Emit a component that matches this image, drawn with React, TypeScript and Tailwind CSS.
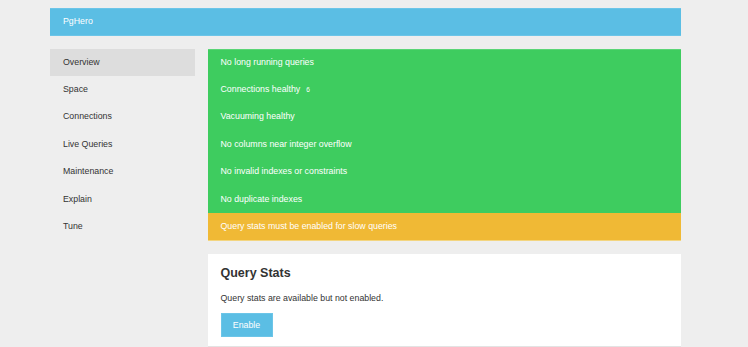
import React from "react";

const nav = ["Overview", "Space", "Connections", "Live Queries", "Maintenance", "Explain", "Tune"];
const checks = [
  "No long running queries",
  "Connections healthy",
  "Vacuuming healthy",
  "No columns near integer overflow",
  "No invalid indexes or constraints",
  "No duplicate indexes",
];

export default function App() {
  return (
    <div className="min-h-screen bg-[#eeeeee] text-[#333333] text-[8.8px]" style={{ fontFamily: '"Liberation Sans", Arial, sans-serif' }}>
      <div className="ml-[50px] w-[631px] pt-[8px]">
        <div className="h-[28px] bg-[#5bbee4] text-white flex items-center pl-[13px] border-y border-[#6cc5e8]">PgHero</div>
        <div className="mt-[12.5px] flex gap-[13px]">
          <div className="w-[145px] shrink-0 flex flex-col">
            {nav.map((n, i) => (
              <div key={n} className={`h-[27.4px] flex items-center pl-[13px] ${i === 0 ? "bg-[#dddddd]" : ""}`}>{n}</div>
            ))}
          </div>
          <div className="flex-1 flex flex-col">
            <div className="bg-[#3ecc5f] border-t border-[#5ad576] text-white">
              {checks.map((c, i) => (
                <div key={c} className={`flex items-center pl-[12.5px] ${i === 0 ? "h-[26.4px]" : "h-[27.4px]"}`}>
                  {c}
                  {i === 1 && <span className="ml-[6px] text-[6.5px]">6</span>}
                </div>
              ))}
            </div>
            <div className="h-[27.7px] bg-[#f0b935] text-white flex items-center pl-[12.5px] border-b border-[#f3d580]">
              Query stats must be enabled for slow queries
            </div>
            <div className="mt-[13px] bg-white border-b border-[#e3e3e3] pt-[13.5px] pb-[9px] pl-[12.5px] pr-[12.5px]">
              <h1 className="text-[12.5px] font-bold leading-[13.75px]">Query Stats</h1>
              <p className="mt-[11.5px] leading-[12.5px]">Query stats are available but not enabled.</p>
              <button className="mt-[8.5px] w-[52px] h-[24px] bg-[#5bbee4] text-white border border-[#6cc5e8] flex items-center justify-center">Enable</button>
            </div>
          </div>
        </div>
      </div>
    </div>
  );
}
